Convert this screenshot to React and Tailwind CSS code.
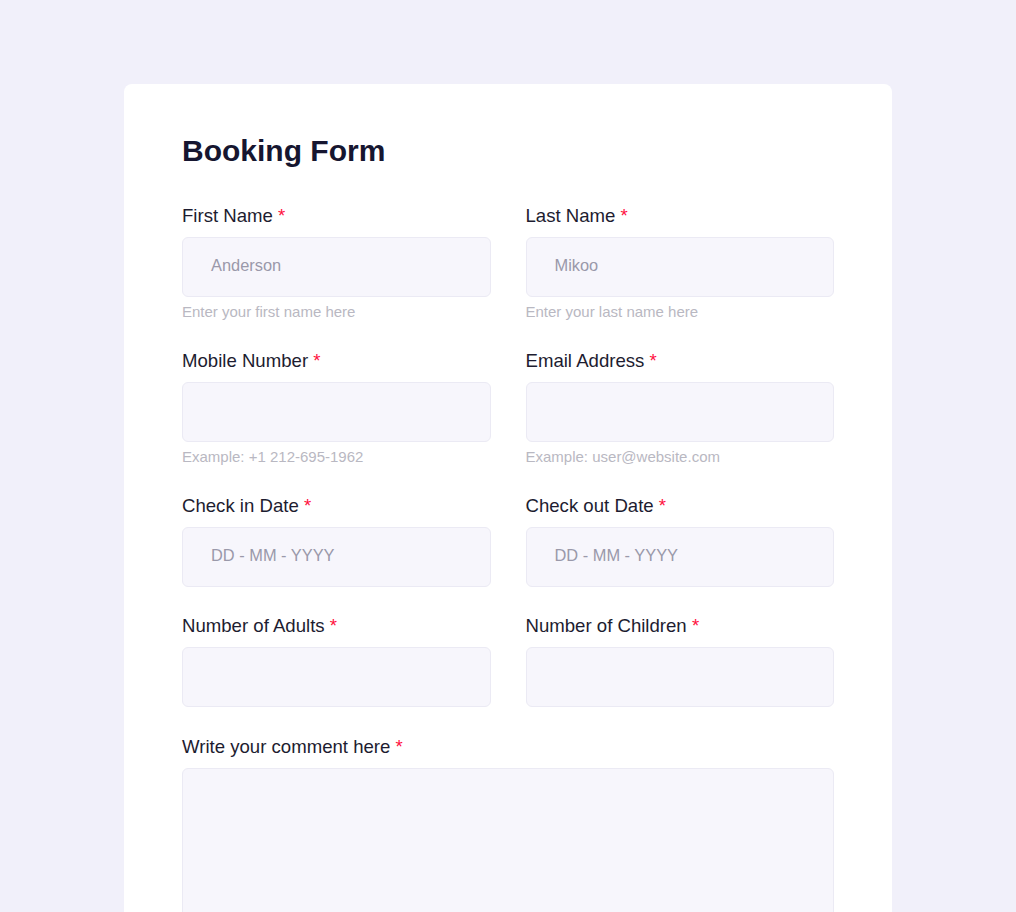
import React from 'react';

const Field = ({ label, placeholder, help, className = '' }) => (
    <div className={className}>
        <label className="block text-[18.6px] leading-6 text-[#1d1c30] mb-[9px]">
            {label} <span className="text-[#ff1040]">*</span>
        </label>
        <div className="h-[60px] rounded-md border border-[#ebeaf4] bg-[#f7f6fc] px-7 pb-1 flex items-center text-[16.4px] text-[#9a99aa]">
            {placeholder}
        </div>
        {help && (
            <p className="mt-[5px] text-[15px] leading-5 text-[#b9b8c2]">{help}</p>
        )}
    </div>
);

export default function App() {
    return (
        <div className="h-[912px] overflow-hidden bg-[#f1f0fa] pt-[84px] font-['Liberation_Sans',Arial,sans-serif]">
            <div className="ml-[124px] w-[768px] rounded-lg bg-white px-[58px] pt-[49px] pb-16">
                <h1 className="text-[30px] leading-9 font-bold text-[#161630] mb-[35px]">Booking Form</h1>
                <div className="grid grid-cols-2 gap-x-[35px] gap-y-[27px]">
                    <Field label="First Name" placeholder="Anderson" help="Enter your first name here" />
                    <Field label="Last Name" placeholder="Mikoo" help="Enter your last name here" />
                    <Field label="Mobile Number" help="Example: +1 212-695-1962" />
                    <Field label="Email Address" help="Example: user@website.com" />
                    <Field label="Check in Date" placeholder="DD - MM - YYYY" />
                    <Field label="Check out Date" placeholder="DD - MM - YYYY" />
                    <Field label="Number of Adults" />
                    <Field label="Number of Children" />
                    <div className="col-span-2 mt-px">
                        <label className="block text-[18.6px] leading-6 text-[#1d1c30] mb-[9px]">
                            Write your comment here <span className="text-[#ff1040]">*</span>
                        </label>
                        <div className="h-[200px] rounded-md border border-[#ebeaf4] bg-[#f7f6fc]" />
                    </div>
                </div>
            </div>
        </div>
    );
}
